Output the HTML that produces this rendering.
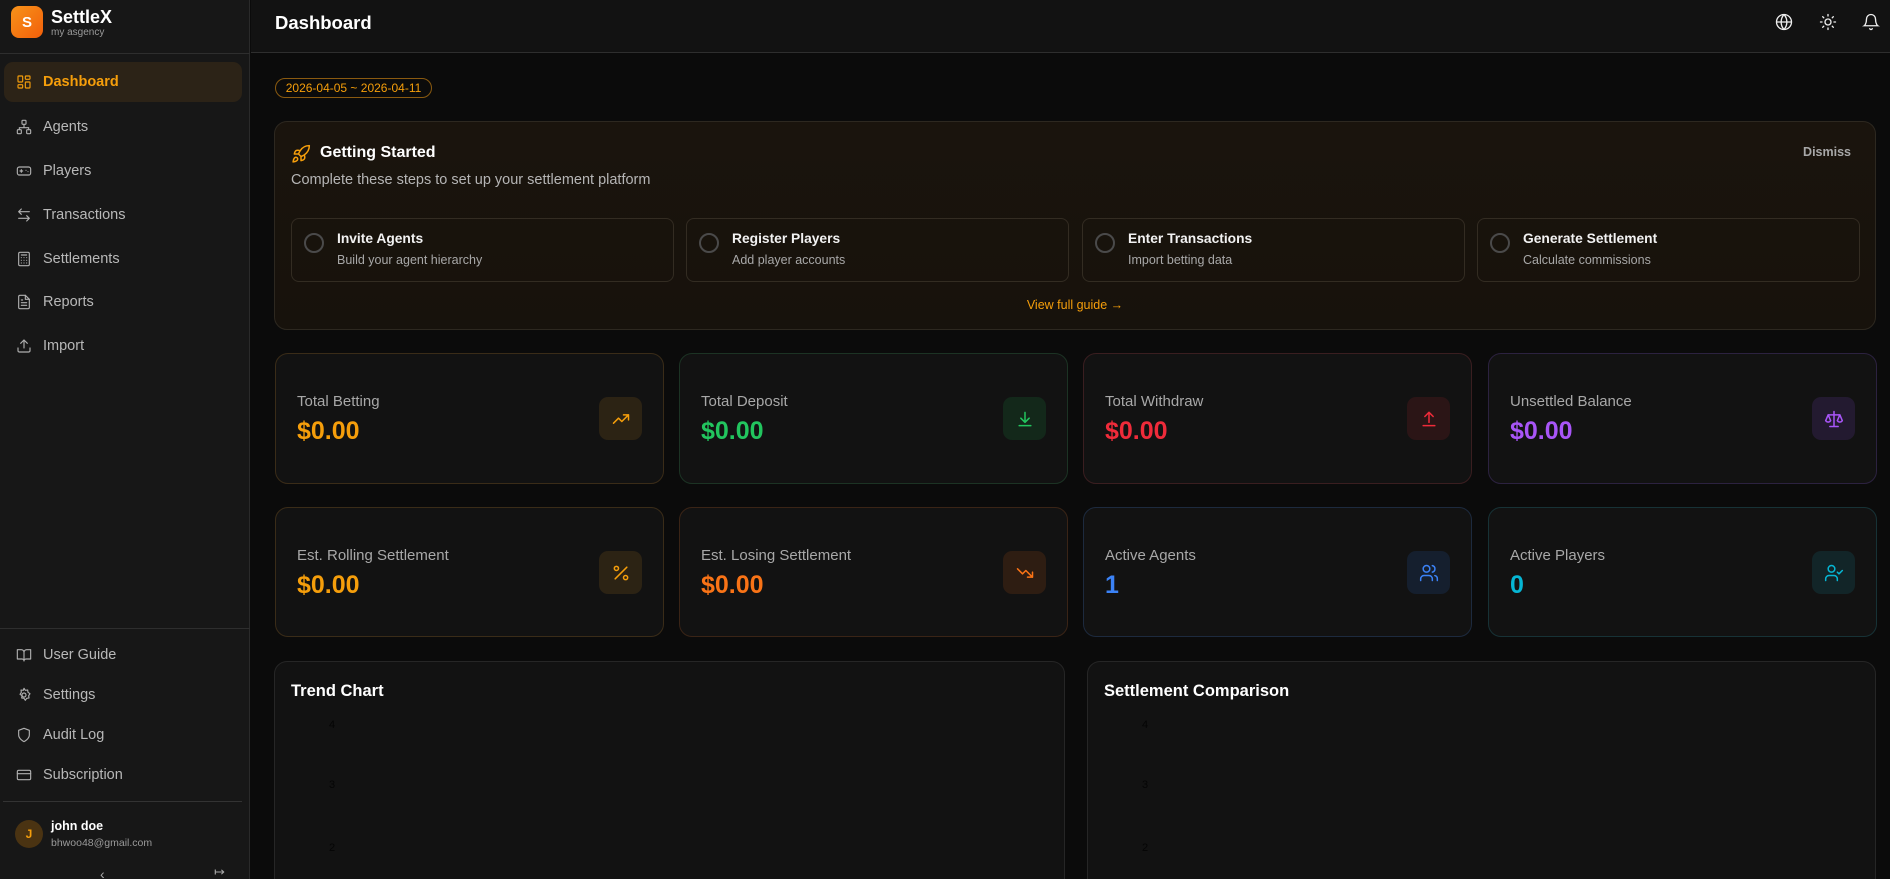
<!DOCTYPE html>
<html><head><meta charset="utf-8"><style>
*{box-sizing:border-box;margin:0;padding:0}
html,body{width:1890px;height:879px;overflow:hidden}
body{background:#0b0b0b;font-family:"Liberation Sans",sans-serif;color:#e5e5e5;position:relative}
.abs{position:absolute}
.side{left:0;top:0;width:250px;height:879px;background:#171717;border-right:1px solid #2a2a2a}
.nav{position:absolute;left:4px;width:238px;height:40px;display:flex;align-items:center;padding-left:12px;font-size:14.5px;color:#b8b8b8;border-radius:9px}
.nav svg{width:16px;height:16px;margin-right:11px;fill:none;stroke:#b0b0b0;stroke-width:1.7;stroke-linecap:round;stroke-linejoin:round}
.nav.act{background:#2c2317;color:#f59e0b;font-weight:bold}
.nav.act svg{stroke:#f59e0b}
.card{position:absolute;background:#121212;border-radius:13px;border:1.5px solid #333}
.step{position:absolute;top:218px;height:64px;width:383px;border:1px solid #332c22;border-radius:8px}
.step .c{position:absolute;left:12px;top:14px;width:20px;height:20px;border:2px solid #4a4a4a;border-radius:50%}
.step .t{position:absolute;left:45px;top:12px;font-size:13.8px;font-weight:bold;color:#f2f2f2}
.step .s{position:absolute;left:45px;top:34px;font-size:12.5px;color:#a8a8a8}
.stat .l{position:absolute;left:21px;top:39px;font-size:15px;color:#a8a8a8}
.stat .v{position:absolute;left:21px;top:63px;font-size:25px;font-weight:bold}
.stat .i{position:absolute;right:21px;top:43px;width:43px;height:43px;border-radius:9px;display:flex;align-items:center;justify-content:center}
.stat .i svg{width:20px;height:20px;fill:none;stroke-width:1.8;stroke-linecap:round;stroke-linejoin:round}
.ax{position:absolute;font-size:11px;color:#050505}
</style></head><body>
<div class="abs side">
  <div class="abs" style="left:11px;top:6px;width:32px;height:32px;border-radius:8px;background:linear-gradient(135deg,#f7931a,#f25f0a);color:#fff;font-weight:bold;font-size:15px;display:flex;align-items:center;justify-content:center">S</div>
  <div class="abs" style="left:51px;top:7px;font-size:18px;font-weight:bold;color:#fff">SettleX</div>
  <div class="abs" style="left:51px;top:27px;font-size:10px;color:#9a9a9a">my asgency</div>
  <div class="abs" style="left:0;top:53px;width:250px;border-top:1px solid #2e2e2e"></div>
  <div class="nav act" style="top:62px"><svg viewBox="0 0 24 24"><rect x="3" y="3" width="7" height="9" rx="1"/><rect x="14" y="3" width="7" height="5" rx="1"/><rect x="14" y="12" width="7" height="9" rx="1"/><rect x="3" y="16" width="7" height="5" rx="1"/></svg>Dashboard</div>
  <div class="nav" style="top:107px"><svg viewBox="0 0 24 24"><rect x="9" y="2" width="6" height="6" rx="1"/><rect x="2" y="16" width="6" height="6" rx="1"/><rect x="16" y="16" width="6" height="6" rx="1"/><path d="M5 16v-3h14v3M12 8v5"/></svg>Agents</div>
  <div class="nav" style="top:151px"><svg viewBox="0 0 24 24"><rect x="2" y="6" width="20" height="12" rx="3"/><path d="M6 12h4M8 10v4M15 11h.01M18 13h.01"/></svg>Players</div>
  <div class="nav" style="top:195px"><svg viewBox="0 0 24 24"><path d="M8 3L4 7l4 4M4 7h16M16 21l4-4-4-4M20 17H4"/></svg>Transactions</div>
  <div class="nav" style="top:239px"><svg viewBox="0 0 24 24"><rect x="4" y="2" width="16" height="20" rx="2"/><path d="M8 6h8M8 10h.01M12 10h.01M16 10h.01M8 14h.01M12 14h.01M16 14h.01M8 18h.01M12 18h.01M16 18h.01"/></svg>Settlements</div>
  <div class="nav" style="top:282px"><svg viewBox="0 0 24 24"><path d="M14 2H6a2 2 0 0 0-2 2v16a2 2 0 0 0 2 2h12a2 2 0 0 0 2-2V8z"/><path d="M14 2v6h6M8 13h8M8 17h8M8 9h2"/></svg>Reports</div>
  <div class="nav" style="top:326px"><svg viewBox="0 0 24 24"><path d="M21 15v4a2 2 0 0 1-2 2H5a2 2 0 0 1-2-2v-4M17 8l-5-5-5 5M12 3v12"/></svg>Import</div>
  <div class="abs" style="left:0;top:628px;width:250px;border-top:1px solid #2e2e2e"></div>
  <div class="nav" style="top:635px"><svg viewBox="0 0 24 24"><path d="M2 4h6a4 4 0 0 1 4 4v13a3 3 0 0 0-3-3H2zM22 4h-6a4 4 0 0 0-4 4v13a3 3 0 0 1 3-3h7z"/></svg>User Guide</div>
  <div class="nav" style="top:675px"><svg viewBox="0 0 24 24"><circle cx="12" cy="12" r="3"/><path d="M12 2l2 3 3.5-.5.5 3.5 3 2-2 3 .5 3.5-3.5.5-2 3-2-3-3.5-.5.5-3.5-3-2 2-3-.5-3.5 3.5.5z"/></svg>Settings</div>
  <div class="nav" style="top:715px"><svg viewBox="0 0 24 24"><path d="M12 22s8-4 8-10V5l-8-3-8 3v7c0 6 8 10 8 10z"/></svg>Audit Log</div>
  <div class="nav" style="top:755px"><svg viewBox="0 0 24 24"><rect x="2" y="5" width="20" height="14" rx="2"/><path d="M2 10h20"/></svg>Subscription</div>
  <div class="abs" style="left:3px;top:801px;width:239px;border-top:1px solid #333"></div>
  <div class="abs" style="left:15px;top:820px;width:28px;height:28px;border-radius:50%;background:#4a3312;color:#f59e0b;font-size:12px;font-weight:bold;display:flex;align-items:center;justify-content:center">J</div>
  <div class="abs" style="left:51px;top:819px;font-size:12.5px;font-weight:bold;color:#fff">john doe</div>
  <div class="abs" style="left:51px;top:837px;font-size:10.5px;color:#9a9a9a">bhwoo48@gmail.com</div>
  <div class="abs" style="left:100px;top:866px;font-size:14px;color:#aaa">‹</div>
  <div class="abs" style="left:214px;top:864px;font-size:13px;color:#aaa">↦</div>
</div>
<div class="abs" style="left:251px;top:0;width:1639px;height:53px;background:#121212;border-bottom:1px solid #2e2e2e"></div>
<div class="abs" style="left:275px;top:12px;font-size:18.5px;font-weight:bold;color:#fff">Dashboard</div>
<svg class="abs" style="left:1775px;top:13px" width="18" height="18" viewBox="0 0 24 24" fill="none" stroke="#eee" stroke-width="1.8"><circle cx="12" cy="12" r="10"/><path d="M2 12h20M12 2a15 15 0 0 1 0 20M12 2a15 15 0 0 0 0 20"/></svg>
<svg class="abs" style="left:1819px;top:13px" width="18" height="18" viewBox="0 0 24 24" fill="none" stroke="#eee" stroke-width="1.8" stroke-linecap="round"><circle cx="12" cy="12" r="4"/><path d="M12 2v2M12 20v2M4.9 4.9l1.4 1.4M17.7 17.7l1.4 1.4M2 12h2M20 12h2M4.9 19.1l1.4-1.4M17.7 6.3l1.4-1.4"/></svg>
<svg class="abs" style="left:1862px;top:13px" width="18" height="18" viewBox="0 0 24 24" fill="none" stroke="#eee" stroke-width="1.8" stroke-linecap="round"><path d="M6 8a6 6 0 0 1 12 0c0 7 3 9 3 9H3s3-2 3-9M10.3 21a1.9 1.9 0 0 0 3.4 0"/></svg>

<div class="abs" style="left:275px;top:78px;width:157px;height:20px;border:1px solid #8a5a10;border-radius:10px;color:#f59e0b;font-size:12px;display:flex;align-items:center;justify-content:center">2026-04-05 ~ 2026-04-11</div>

<div class="card" style="left:274px;top:121px;width:1602px;height:209px;background:linear-gradient(180deg,#1a140d,#17120c);border:1px solid #2d2820">
  <svg class="abs" style="left:16px;top:22px" width="20" height="20" viewBox="0 0 24 24" fill="none" stroke="#f59e0b" stroke-width="1.8" stroke-linecap="round" stroke-linejoin="round"><path d="M4.5 16.5c-1.5 1.3-2 5-2 5s3.7-.5 5-2c.7-.8.7-2.1-.1-2.9a2.2 2.2 0 0 0-2.9-.1zM12 15l-3-3a22 22 0 0 1 2-3.9A12.9 12.9 0 0 1 22 2c0 2.7-.8 7.5-6 11a22 22 0 0 1-4 2zM9 12H4s.6-3 2-4c1.6-1.1 5 0 5 0M12 15v5s3-.6 4-2c1.1-1.6 0-5 0-5"/></svg>
  <div class="abs" style="left:45px;top:22px;font-size:16px;font-weight:bold;color:#fff">Getting Started</div>
  <div class="abs" style="left:16px;top:50px;font-size:14.5px;color:#b5b5b5">Complete these steps to set up your settlement platform</div>
  <div class="abs" style="right:24px;top:23px;font-size:12.5px;color:#a8a8a8;font-weight:bold">Dismiss</div>
  <div class="step" style="left:16px;top:96px"><div class="c"></div><div class="t">Invite Agents</div><div class="s">Build your agent hierarchy</div></div>
  <div class="step" style="left:411px;top:96px"><div class="c"></div><div class="t">Register Players</div><div class="s">Add player accounts</div></div>
  <div class="step" style="left:807px;top:96px"><div class="c"></div><div class="t">Enter Transactions</div><div class="s">Import betting data</div></div>
  <div class="step" style="left:1202px;top:96px"><div class="c"></div><div class="t">Generate Settlement</div><div class="s">Calculate commissions</div></div>
  <div class="abs" style="left:0;width:100%;top:176px;text-align:center;font-size:12.5px;color:#f59e0b">View full guide →</div>
</div>

<div class="card stat" style="left:275px;top:353px;width:389px;height:131px;border-color:#3a2c18"><div class="l">Total Betting</div><div class="v" style="color:#f59e0b">$0.00</div><div class="i" style="background:#2c2314"><svg viewBox="0 0 24 24" stroke="#f59e0b"><path d="M3 17l6-6 4 4 8-8M15 7h6v6"/></svg></div></div>
<div class="card stat" style="left:679px;top:353px;width:389px;height:131px;border-color:#1c3324"><div class="l">Total Deposit</div><div class="v" style="color:#22c55e">$0.00</div><div class="i" style="background:#13281a"><svg viewBox="0 0 24 24" stroke="#22c55e"><path d="M12 4v12M7 11l5 5 5-5M5 20h14"/></svg></div></div>
<div class="card stat" style="left:1083px;top:353px;width:389px;height:131px;border-color:#3a1e20"><div class="l">Total Withdraw</div><div class="v" style="color:#ef2b3a">$0.00</div><div class="i" style="background:#2b1516"><svg viewBox="0 0 24 24" stroke="#ef2b3a"><path d="M12 16V4M7 9l5-5 5 5M5 20h14"/></svg></div></div>
<div class="card stat" style="left:1488px;top:353px;width:389px;height:131px;border-color:#2c2240"><div class="l">Unsettled Balance</div><div class="v" style="color:#a855f7">$0.00</div><div class="i" style="background:#231a30"><svg viewBox="0 0 24 24" stroke="#a855f7"><path d="M12 3v18M7 21h10M5 7h14M5 7l-3 7a3.5 3.5 0 0 0 6 0zM19 7l-3 7a3.5 3.5 0 0 0 6 0z"/></svg></div></div>

<div class="card stat" style="left:275px;top:507px;width:389px;height:130px;border-color:#3a2c18"><div class="l">Est. Rolling Settlement</div><div class="v" style="color:#f59e0b">$0.00</div><div class="i" style="background:#2c2314"><svg viewBox="0 0 24 24" stroke="#f59e0b"><path d="M19 5L5 19"/><circle cx="6.5" cy="6.5" r="2.5"/><circle cx="17.5" cy="17.5" r="2.5"/></svg></div></div>
<div class="card stat" style="left:679px;top:507px;width:389px;height:130px;border-color:#3a2416"><div class="l">Est. Losing Settlement</div><div class="v" style="color:#f97316">$0.00</div><div class="i" style="background:#2e1d12"><svg viewBox="0 0 24 24" stroke="#f97316"><path d="M3 7l6 6 4-4 8 8M21 11v6h-6"/></svg></div></div>
<div class="card stat" style="left:1083px;top:507px;width:389px;height:130px;border-color:#1d2a3e"><div class="l">Active Agents</div><div class="v" style="color:#3b82f6">1</div><div class="i" style="background:#151f2e"><svg viewBox="0 0 24 24" stroke="#3b82f6"><circle cx="9" cy="7" r="4"/><path d="M2 21v-2a4 4 0 0 1 4-4h6a4 4 0 0 1 4 4v2M16 3.1a4 4 0 0 1 0 7.8M22 21v-2a4 4 0 0 0-3-3.9"/></svg></div></div>
<div class="card stat" style="left:1488px;top:507px;width:389px;height:130px;border-color:#173236"><div class="l">Active Players</div><div class="v" style="color:#06b6d4">0</div><div class="i" style="background:#122528"><svg viewBox="0 0 24 24" stroke="#06b6d4"><circle cx="9" cy="7" r="4"/><path d="M2 21v-2a4 4 0 0 1 4-4h6a4 4 0 0 1 4 4v2M16 11l2 2 4-4"/></svg></div></div>

<div class="card" style="left:274px;top:661px;width:791px;height:240px;border:1px solid #262626">
  <div class="abs" style="left:16px;top:20px;font-size:16.5px;font-weight:bold;color:#fff">Trend Chart</div>
  <div class="ax" style="left:54px;top:57px">4</div><div class="ax" style="left:54px;top:117px">3</div><div class="ax" style="left:54px;top:180px">2</div>
</div>
<div class="card" style="left:1087px;top:661px;width:789px;height:240px;border:1px solid #262626">
  <div class="abs" style="left:16px;top:20px;font-size:16.5px;font-weight:bold;color:#fff">Settlement Comparison</div>
  <div class="ax" style="left:54px;top:57px">4</div><div class="ax" style="left:54px;top:117px">3</div><div class="ax" style="left:54px;top:180px">2</div>
</div>
</body></html>
